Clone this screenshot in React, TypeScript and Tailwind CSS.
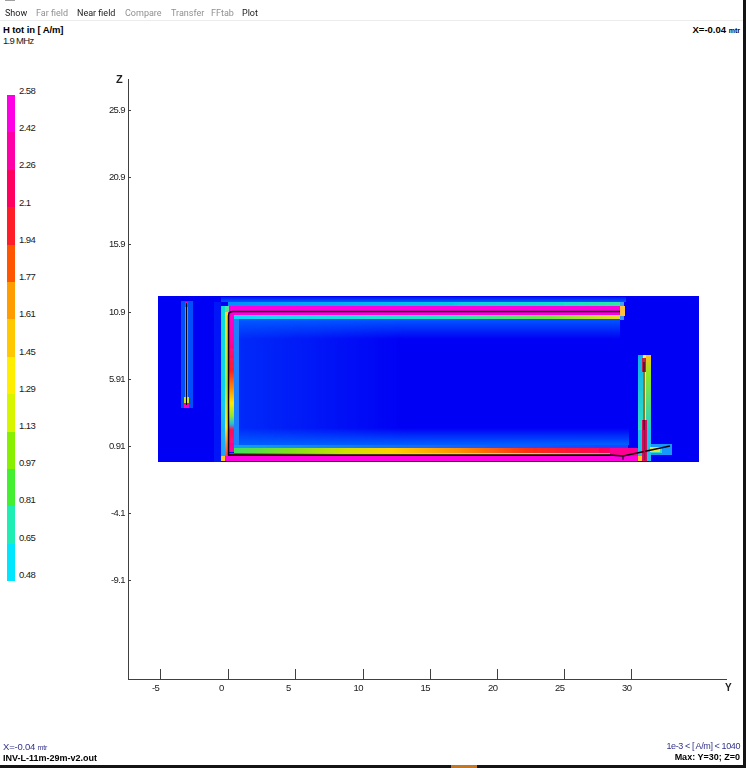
const sans = { fontFamily: '"Liberation Sans", Arial, sans-serif' }

const menu = [
  { label: 'Show', on: true, w: 'w-[31px]' },
  { label: 'Far field', on: false, w: 'w-[41px]' },
  { label: 'Near field', on: true, w: 'w-[48px]' },
  { label: 'Compare', on: false, w: 'w-[46px]' },
  { label: 'Transfer', on: false, w: 'w-[40px]' },
  { label: 'FFtab', on: false, w: 'w-[31px]' },
  { label: 'Plot', on: true, w: 'w-[24px]' },
]

const legend = [
  '#ff00e6', '#ff00a8', '#ff0060', '#ff1e28', '#ff5400', '#ff9c00', '#ffc800',
  '#ffee00', '#d8f500', '#86f000', '#44ee30', '#1eeeb4', '#00e6ff',
]

const legendLabels = ['2.58', '2.42', '2.26', '2.1', '1.94', '1.77', '1.61', '1.45', '1.29', '1.13', '0.97', '0.81', '0.65', '0.48']

const yTicks = [
  { y: 110, t: '25.9' }, { y: 177, t: '20.9' }, { y: 244, t: '15.9' }, { y: 312, t: '10.9' },
  { y: 379, t: '5.91' }, { y: 446, t: '0.91' }, { y: 513, t: '-4.1' }, { y: 580, t: '-9.1' },
]

const xTicks = [
  { x: 160, t: '-5', lx: 152 }, { x: 227.5, t: '0', lx: 219 }, { x: 295, t: '5', lx: 286 },
  { x: 362.5, t: '10', lx: 353.5 }, { x: 430, t: '15', lx: 420.5 }, { x: 497, t: '20', lx: 488 },
  { x: 563.5, t: '25', lx: 555 }, { x: 630.5, t: '30', lx: 622 },
]

// x, y, w, h, fill
const cells: [number, number, number, number, string][] = [
  // halo round the wires
  [181, 301, 12, 107, '#0050fa'],
  [214, 302, 7, 160, '#0014f8'],
  [221, 297, 405, 5, 'url(#haloTop)'],
  // short wire on the left
  [185, 302, 3, 104, '#00c0f0'],
  [185, 302, 3, 5, '#ff00a0'],
  [184, 397, 5, 6, '#c8e820'],
  [184, 403, 5, 5, '#ff00c0'],
  // long top wire
  [228, 302, 392, 4, 'url(#topUpper)'],
  [228, 306, 392, 9, '#ff00e0'],
  [234, 315, 386, 4, 'url(#topLower)'],
  [620, 306, 5, 10, '#ffc040'],
  [620, 302, 4, 4, '#40a0ff'],
  [620, 316, 4, 4, '#3090ff'],
  // left riser
  [221, 306, 4, 150, 'url(#riserOuter)'],
  [225, 306, 4, 6, '#50e8a0'],
  [225, 312, 3, 144, 'url(#riserMid)'],
  [228, 312, 6, 140, 'url(#riserInner)'],
  [234, 319, 5, 126, '#1a80ff'],
  [221, 456, 4, 5, '#ffc820'],
  // bottom wire
  [234, 445, 376, 3, 'url(#botHalo)'],
  [610, 445, 18, 3, '#2040ff'],
  [234, 448, 376, 5, 'url(#botUpper)'],
  [228, 453, 382, 2, 'url(#botThin)'],
  [225, 456, 415, 5, '#ff00e0'],
  [610, 448, 30, 8, '#ff0090'],
  // right riser
  [638, 355, 5, 75, 'url(#rrLeft)'],
  [643, 355, 3, 75, '#fff040'],
  [646, 355, 5, 75, 'url(#rrRight)'],
  [642, 358, 4, 14, '#c02050'],
  [640, 444, 32, 11, '#1898ff'],
  [640, 447, 22, 6, '#30e0c0'],
  [638, 430, 13, 31, '#20c0f0'],
  [650, 447, 10, 5, '#e0e840'],
  [642, 420, 5, 41, '#d81060'],
  [638, 456, 4, 5, '#ffc820'],
]

const stops = (rows: [number, string, number?][]) =>
  rows.map(([o, c, a]) => <stop key={o} offset={o} stopColor={c} stopOpacity={a ?? 1} />)

function Plot() {
  return (
    <svg viewBox="100 70 640 630" className="w-[640px] h-[630px] shrink-0" style={sans}>
      <defs>
        <filter id="soft" x="-2%" y="-2%" width="104%" height="104%">
          <feGaussianBlur stdDeviation="0.5" />
        </filter>
        <linearGradient id="glowTop" x1="0" y1="0" x2="0" y2="1">{stops([[0, '#0058ff'], [1, '#0058ff', 0]])}</linearGradient>
        <linearGradient id="glowLeft" x1="0" y1="0" x2="1" y2="0">{stops([[0, '#0060ff'], [1, '#0060ff', 0]])}</linearGradient>
        <linearGradient id="glowBot" x1="0" y1="1" x2="0" y2="0">{stops([[0, '#0060ff'], [1, '#0060ff', 0]])}</linearGradient>
        <linearGradient id="haloTop" x1="0" y1="0" x2="0" y2="1">{stops([[0, '#0018f0'], [1, '#0058ff']])}</linearGradient>
        <linearGradient id="topUpper">{stops([[0, '#0090ff'], [0.4, '#00b8f0'], [0.85, '#10e0c8'], [1, '#30e8a0']])}</linearGradient>
        <linearGradient id="topLower">{stops([[0, '#10d8ff'], [0.55, '#20e8c0'], [0.82, '#70e840'], [1, '#e8e020']])}</linearGradient>
        <linearGradient id="riserOuter" x1="0" y1="0" x2="0" y2="1">{stops([[0, '#10e0d0'], [0.6, '#10d0f0'], [1, '#20a0ff']])}</linearGradient>
        <linearGradient id="riserMid" x1="0" y1="0" x2="0" y2="1">{stops([[0, '#ffe020'], [0.5, '#a0e840'], [0.8, '#ffe020'], [1, '#ff4040']])}</linearGradient>
        <linearGradient id="riserInner" x1="0" y1="0" x2="0" y2="1">
          {stops([[0, '#ff00d8'], [0.22, '#ff00a0'], [0.42, '#ff2020'], [0.55, '#ff9000'], [0.65, '#ffe800'], [0.74, '#90e830'], [0.8, '#20c0e0'], [0.84, '#ff1050'], [1, '#ff00b0']])}
        </linearGradient>
        <linearGradient id="botHalo">{stops([[0, '#10a0ff'], [0.4, '#1070ff'], [1, '#2040ff']])}</linearGradient>
        <linearGradient id="botUpper">
          {stops([[0, '#40e060'], [0.15, '#80e020'], [0.3, '#d0e000'], [0.42, '#ffd000'], [0.6, '#ff9000'], [0.78, '#ff3010'], [1, '#ff0060']])}
        </linearGradient>
        <linearGradient id="botThin">{stops([[0, '#e01040'], [0.3, '#ffc020'], [0.8, '#ffe020'], [1, '#80d040']])}</linearGradient>
        <linearGradient id="rrLeft" x1="0" y1="0" x2="0" y2="1">{stops([[0, '#10b0f0'], [1, '#30e0c0']])}</linearGradient>
        <linearGradient id="rrRight" x1="0" y1="0" x2="0" y2="1">{stops([[0, '#ffc020'], [0.25, '#90e820'], [1, '#20d0d0']])}</linearGradient>
      </defs>

      {/* field map */}
      <rect x={158} y={296} width={541} height={166} fill="#0000f5" />
      <g filter="url(#soft)">
        <rect x={234} y={319} width={386} height={20} fill="url(#glowTop)" />
        <rect x={234} y={319} width={170} height={126} fill="url(#glowLeft)" opacity={0.45} />
        <rect x={234} y={428} width={395} height={17} fill="url(#glowBot)" />
        {cells.map(([x, y, w, h, fill], i) => (
          <rect key={i} x={x} y={y} width={w} height={h} fill={fill} />
        ))}
      </g>

      {/* wires */}
      <g fill="none" stroke="#10000a">
        <path d="M186.5 303V405" strokeWidth={1} />
        <path d="M620 311.5H233Q228.5 311.5 228.5 316V455H610L623 456L670 446" strokeWidth={1.5} />
        <path d="M623 456V460" strokeWidth={1} />
        <path d="M644 362V430" strokeWidth={1} />
      </g>
      <path d="M644.5 430V460" stroke="#a01040" strokeWidth={1.5} />

      {/* axes */}
      <g stroke="#404040" fill="none" shapeRendering="crispEdges">
        <path d="M128.5 79V679.5H727" />
        {yTicks.map((t) => (
          <path key={t.t} d={`M128 ${t.y}.5H131`} />
        ))}
        {xTicks.map((t) => (
          <path key={t.t} d={`M${Math.round(t.x)}.5 669V679`} />
        ))}
      </g>
      <g fontSize={9.5} letterSpacing={-0.6} fill="#202020">
        {yTicks.map((t) => (
          <text key={t.t} x={125} y={t.y + 3} textAnchor="end">{t.t}</text>
        ))}
        {xTicks.map((t) => (
          <text key={t.t} x={t.lx} y={691}>{t.t}</text>
        ))}
      </g>
      <text x={116} y={83} fontSize={11} fontWeight={700} fill="#202020">Z</text>
      <text x={725} y={691} fontSize={10} fontWeight={700} fill="#202020">Y</text>
    </svg>
  )
}

export default function App() {
  return (
    <div className="w-[746px] h-[768px] flex flex-col bg-white overflow-hidden text-[#202020]" style={sans}>
      <div className="flex flex-1 min-h-0">
        <div className="flex-1 flex flex-col min-w-0">
          <div className="relative h-[21px] flex items-center pl-[5px] pt-[6px] border-b border-[#ececec]" style={{ fontFamily: 'Roboto, sans-serif' }}>
            <span className="absolute left-[5px] top-0 w-[10px] h-px bg-[#a0a0a0]" />
            {menu.map((m) => (
              <span key={m.label} className={`text-[9px] leading-none whitespace-nowrap ${m.w} ${m.on ? 'text-[#202020]' : 'text-[#909090]'}`}>
                {m.label}
              </span>
            ))}
          </div>

          <div className="flex justify-between pl-[3px] pr-[3px] pt-[3px]">
            <div className="flex flex-col">
              <span className="text-[9.5px] leading-[11px] font-bold tracking-[-0.1px] text-black">H tot in [ A/m]</span>
              <span className="text-[9.5px] leading-[11px] tracking-[-0.7px] text-[#202020]">1.9 MHz</span>
            </div>
            <span className="text-[9.5px] leading-[11px] font-bold text-black">
              X=-0.04 <span className="text-[7px]">mtr</span>
            </span>
          </div>

          <div className="flex mt-[24px]">
            <div className="w-[100px] shrink-0 flex pl-[7px] pt-[25px] gap-[4px]">
              <div className="w-[8px] flex flex-col h-[486px]">
                {legend.map((c) => (
                  <div key={c} className="flex-1" style={{ backgroundColor: c }} />
                ))}
              </div>
              <div className="flex flex-col justify-between h-[495px] -mt-[10px] text-[9.5px] leading-[11px] tracking-[-0.6px] text-[#202020]">
                {legendLabels.map((l) => (
                  <span key={l}>{l}</span>
                ))}
              </div>
            </div>
            <Plot />
          </div>

          <div className="mt-auto flex justify-between pl-[3px] pr-[3px] pb-[1px]">
            <div className="flex flex-col">
              <span className="text-[9.5px] leading-[11px] tracking-[-0.2px] text-[#33338a]">
                X=-0.04 <span className="text-[7px]">mtr</span>
              </span>
              <span className="text-[9px] leading-[11px] font-bold text-black">INV-L-11m-29m-v2.out</span>
            </div>
            <div className="flex flex-col items-end">
              <span className="text-[9px] leading-[11px] tracking-[-0.4px] text-[#33338a]">1e-3 &lt; [ A/m] &lt; 1040</span>
              <span className="text-[9px] leading-[11px] font-bold text-black">Max: Y=30; Z=0</span>
            </div>
          </div>
        </div>
        <div className="w-[3px] bg-[#141414] shrink-0" />
      </div>
      <div className="h-[3px] bg-[#141414] shrink-0 pl-[451px]">
        <div className="w-[26px] h-full bg-[#c07828]" />
      </div>
    </div>
  )
}
